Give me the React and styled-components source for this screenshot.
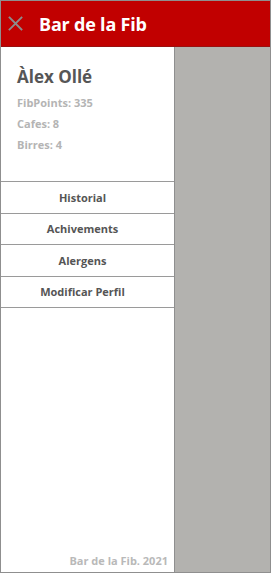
import React from "react";
import styled, { createGlobalStyle } from "styled-components";

const Global = createGlobalStyle`
  html, body { margin: 0; padding: 0; background: #ffffff; }
  body { font-family: "Open Sans", "Noto Sans", sans-serif; }
`;

const Frame = styled.div`
  width: 271px;
  height: 573px;
  box-sizing: border-box;
  border: 1px solid #8f8f8f;
  display: flex;
  flex-direction: column;
  overflow: hidden;
`;

const Header = styled.header`
  height: 46px;
  flex: none;
  box-sizing: border-box;
  background: #c10000;
  border-bottom: 1px solid #9a1010;
  display: flex;
  align-items: center;
  padding-left: 7px;
  gap: 16px;
`;

const CloseButton = styled.button`
  border: none;
  background: none;
  padding: 0;
  width: 15px;
  height: 15px;
  display: flex;
  align-items: center;
  justify-content: center;
  cursor: pointer;
`;

const Title = styled.h1`
  margin: 0;
  color: #ffffff;
  font-size: 18px;
  font-weight: 700;
  letter-spacing: -0.2px;
`;

const Body = styled.div`
  flex: 1;
  display: flex;
  min-height: 0;
`;

const Drawer = styled.nav`
  width: 174px;
  flex: none;
  box-sizing: border-box;
  background: #ffffff;
  border-right: 1px solid #8f8f8f;
  display: flex;
  flex-direction: column;
`;

const Profile = styled.section`
  height: 135px;
  box-sizing: border-box;
  padding: 18px 0 0 16px;
  border-bottom: 1px solid #9a9a9a;
`;

const Name = styled.h2`
  margin: 0 0 3px;
  font-size: 17px;
  font-weight: 700;
  color: #565656;
  line-height: 24px;
`;

const Stat = styled.p`
  margin: 0;
  font-size: 11px;
  font-weight: 700;
  color: #b4b4b4;
  line-height: 21px;
`;

const Menu = styled.ul`
  list-style: none;
  margin: 0;
  padding: 0;
`;

const MenuItem = styled.li`
  height: 31.5px;
  box-sizing: border-box;
  border-bottom: 1px solid #9a9a9a;
  padding-right: 10px;
  display: flex;
  align-items: center;
  justify-content: center;
  font-size: 11px;
  font-weight: 700;
  color: #555555;
`;

const Footer = styled.footer`
  margin-top: auto;
  padding: 0 6px 4px 0;
  text-align: right;
  font-size: 11px;
  font-weight: 700;
  color: #b9b9b9;
`;

const Overlay = styled.div`
  flex: 1;
  background: #b3b2af;
`;

const CloseIcon = () => (
  <svg width="15" height="15" viewBox="0 0 15 15">
    <path d="M1.5 1.5 L13.5 13.5 M13.5 1.5 L1.5 13.5" stroke="#8c8c8c" strokeWidth="1.8" strokeLinecap="square" />
  </svg>
);

const items = ["Historial", "Achivements", "Alergens", "Modificar Perfil"];

export default function App() {
  return (
    <>
      <Global />
      <Frame>
        <Header>
          <CloseButton aria-label="Tancar"><CloseIcon /></CloseButton>
          <Title>Bar de la Fib</Title>
        </Header>
        <Body>
          <Drawer>
            <Profile>
              <Name>Àlex Ollé</Name>
              <Stat>FibPoints: 335</Stat>
              <Stat>Cafes: 8</Stat>
              <Stat>Birres: 4</Stat>
            </Profile>
            <Menu>
              {items.map((t) => (
                <MenuItem key={t}>{t}</MenuItem>
              ))}
            </Menu>
            <Footer>Bar de la Fib. 2021</Footer>
          </Drawer>
          <Overlay />
        </Body>
      </Frame>
    </>
  );
}
